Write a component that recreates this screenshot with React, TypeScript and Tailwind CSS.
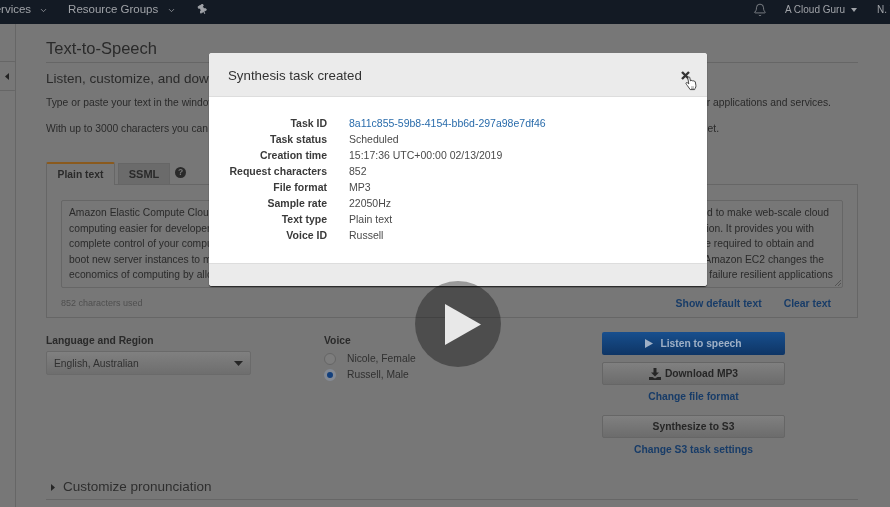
import { ChevronDown, Bell, Pin } from 'lucide-react'

const details = [
  ['Task ID', '8a11c855-59b8-4154-bb6d-297a98e7df46'],
  ['Task status', 'Scheduled'],
  ['Creation time', '15:17:36 UTC+00:00 02/13/2019'],
  ['Request characters', '852'],
  ['File format', 'MP3'],
  ['Sample rate', '22050Hz'],
  ['Text type', 'Plain text'],
  ['Voice ID', 'Russell'],
]

// the middle of each line sits behind the modal
const textLines = [
  ['Amazon Elastic Compute Cloud (Amazon', 'designed to make web-scale cloud', 'flex justify-between pr-[6px]'],
  ['computing easier for developers. Amazon', 'friction. It provides you with', 'flex justify-between pr-[21px]'],
  ['complete control of your computing', 'the time required to obtain and', 'flex justify-between pr-[21px]'],
  ['boot new server instances to minutes', 'change. Amazon EC2 changes the', 'flex justify-between pr-[11px]'],
  ['economics of computing by allowing', 'to build failure resilient applications', 'flex justify-between pr-[2px]'],
]

function TopBar() {
  return (
    <div className="h-[24px] shrink-0 bg-[#131a24] flex items-center text-[11.5px] text-[#a0a3a8] pb-[5px] overflow-hidden">
      <span className="ml-[-13px]">Services</span>
      <ChevronDown className="w-[9px] h-[9px] ml-[8px] mt-[1px]" strokeWidth={2} />
      <span className="ml-[20px]">Resource Groups</span>
      <ChevronDown className="w-[9px] h-[9px] ml-[9px] mt-[1px]" strokeWidth={2} />
      <Pin className="w-[11px] h-[11px] ml-[21px] rotate-[-30deg] fill-[#a0a3a8]" strokeWidth={2} />
      <Bell className="w-[14px] h-[16px] ml-auto" strokeWidth={1.2} />
      <span className="ml-[18px] text-[10px]">A Cloud Guru</span>
      <svg className="ml-[6px]" width="6" height="4" viewBox="0 0 6 4"><path d="M0 0h6L3 4z" fill="#a0a3a8" /></svg>
      <span className="ml-[20px] w-[13px] shrink-0 whitespace-nowrap text-[10px]">N. Virginia</span>
    </div>
  )
}

function Sidebar() {
  return (
    <div className="relative w-[16px] shrink-0 border-r border-[#666666]">
      <div className="absolute left-0 top-[37px] w-[16px] h-[30px] bg-[#777777] border border-l-0 border-[#666666] rounded-r-[2px] flex items-center justify-center pr-[2px]">
        <svg width="4" height="7" viewBox="0 0 4 7"><path d="M4 0v7L0 3.5z" fill="#222222" /></svg>
      </div>
    </div>
  )
}

function Button({ children, primary }: { children: React.ReactNode; primary?: boolean }) {
  return (
    <div
      className={
        primary
          ? 'h-[23px] rounded-[2px] bg-gradient-to-b from-[#184f8e] to-[#0e3565] text-[#9fb0c6] text-[10.3px] font-bold flex items-center justify-center gap-[7px]'
          : 'h-[23px] rounded-[2px] border border-[#666666] bg-gradient-to-b from-[#808080] to-[#6c6c6c] text-[#262626] text-[10.3px] font-bold flex items-center justify-center gap-[4px]'
      }
    >
      {children}
    </div>
  )
}

function Modal() {
  return (
    <div className="absolute left-[209px] top-[53px] w-[498px] h-[233px] rounded-[3px] bg-white flex flex-col overflow-hidden shadow-[0_1px_1px_rgba(0,0,0,0.7)]">
      <div className="relative h-[44px] shrink-0 bg-[#ebebeb] border-b border-[#dddddd] flex items-center pl-[19px] pt-[2px] text-[13.3px] text-[#333333]">
        Synthesis task created
        <svg className="absolute left-[472px] top-[18px]" width="9" height="9" viewBox="0 0 9 9">
          <path d="M1 1l7 7M8 1L1 8" stroke="#333333" strokeWidth="2.4" />
        </svg>
        <svg className="absolute left-[476px] top-[23px]" width="12" height="15" viewBox="0 0 12 15">
          <path
            d="M3.2 1.2c.6-.6 1.4-.3 1.6.5l.7 3.4 .6-.6c.5-.3 1.1-.2 1.4.3.5-.3 1.1-.1 1.4.4.6-.2 1.2.1 1.4.7l.6 3.4c.2 1.2-.1 2.2-.8 3.1l-.5 1.2H5.2L2.4 9.6C1.8 8.8.9 8 1 7.2c.1-.7.9-.9 1.5-.4l1.3 1.1-.9-5.4c-.1-.5 0-1 .3-1.3z"
            fill="#ffffff"
            stroke="#333333"
            strokeWidth="0.9"
          />
          <path d="M6 11h3M6 12.4h3" stroke="#888888" strokeWidth="0.8" />
        </svg>
      </div>
      <div className="flex-1 pt-[18.5px]">
        {details.map(([label, value], i) => (
          <div key={label} className="flex h-[16.1px] items-center text-[10.5px]">
            <span className="w-[118px] text-right font-bold text-[#3a3a3a] whitespace-nowrap">{label}</span>
            <span className={i === 0 ? 'ml-[22px] text-[#2a6cab]' : 'ml-[22px] text-[#4a4a4a]'}>{value}</span>
          </div>
        ))}
      </div>
      <div className="h-[23px] shrink-0 bg-[#ebebeb] border-t border-[#dddddd]" />
    </div>
  )
}

export default function App() {
  return (
    <div className="relative w-[890px] h-[507px] overflow-hidden bg-[#777777] flex flex-col blur-[0.4px] font-['Liberation_Sans',Arial,sans-serif] text-[#262626]">
      <TopBar />
      <div className="flex flex-1 min-h-0">
        <Sidebar />
        <div className="w-[812px] ml-[30px] shrink-0">
          <div className="pt-[14px] pb-[4px] text-[16.5px] leading-[20px] text-[#2a2a2a] border-b border-[#666666]">Text-to-Speech</div>
          <div className="mt-[7px] text-[13.5px] leading-[18px] text-[#2a2a2a]">Listen, customize, and download speech</div>
          <div className="mt-[8px] flex justify-between pr-[27px] text-[10.3px] leading-[14px] text-[#2a2a2a]">
            <span>Type or paste your text in the window</span>
            <span>your applications and services.</span>
          </div>
          <div className="mt-[12px] flex justify-between pr-[139px] text-[10.3px] leading-[14px] text-[#2a2a2a]">
            <span>With up to 3000 characters you can</span>
            <span>internet.</span>
          </div>

          {/* Tabs */}
          <div className="mt-[25px] flex items-end h-[23px] text-[10.3px] font-bold">
            <div className="w-[69px] h-[23px] border-t-2 border-x border-t-[#8a5a1e] border-x-[#666666] rounded-t-[2px] flex items-center justify-center text-[#2a2a2a] relative top-[1px] bg-[#777777]">Plain text</div>
            <div className="w-[52px] h-[21px] ml-[3px] bg-[#6b6b6b] border border-[#666666] border-b-0 flex items-center justify-center text-[11px] text-[#2a2a2a]">SSML</div>
            <div className="w-[11px] h-[11px] ml-[5px] mb-[6px] rounded-full bg-[#2a2a2a] text-[#777777] text-[8.5px] font-bold leading-[11px] text-center">?</div>
          </div>

          {/* Text panel */}
          <div className="h-[134px] border border-[#666666] px-[14px] pt-[15px]">
            <div className="relative h-[88px] border border-[#666666] rounded-[2px] px-[7px] pt-[4px] overflow-hidden text-[10.3px] leading-[15.5px] text-[#2a2a2a]">
              {textLines.map(([left, right, cls]) => (
                <div key={left} className={cls}>
                  <span className="whitespace-nowrap">{left}</span>
                  <span className="whitespace-nowrap">{right}</span>
                </div>
              ))}
              <svg className="absolute right-[1px] bottom-[1px]" width="6" height="6" viewBox="0 0 6 6">
                <path d="M0 6l6-6M3 6l3-3" stroke="#444444" strokeWidth="0.7" />
              </svg>
            </div>
            <div className="mt-[8px] flex items-center text-[9px] text-[#4f4f4f]">
              <span>852 characters used</span>
              <span className="ml-auto mr-[22px] text-[10.4px] font-bold text-[#183c68]">Show default text</span>
              <span className="mr-[12px] text-[10.4px] font-bold text-[#183c68]">Clear text</span>
            </div>
          </div>

          {/* Options */}
          <div className="flex mt-[14px] h-[148px]">
            <div className="w-[205px]">
              <div className="h-[19px] pt-[1px] text-[10.3px] font-bold text-[#2a2a2a]">Language and Region</div>
              <div className="h-[24px] rounded-[2px] border border-[#6a6a6a] bg-gradient-to-b from-[#808080] to-[#6e6e6e] flex items-center justify-between px-[7px] text-[10.3px] text-[#303030]">
                <span className="pt-[2px]">English, Australian</span>
                <svg width="9" height="5" viewBox="0 0 9 5"><path d="M0 0h9L4.5 5z" fill="#262626" /></svg>
              </div>
            </div>
            <div className="ml-[73px] w-[278px]">
              <div className="h-[19px] pt-[1px] text-[10.3px] font-bold text-[#2a2a2a]">Voice</div>
              <div className="flex items-center h-[16px] text-[10.3px] text-[#303030]">
                <span className="w-[12px] h-[12px] rounded-full border border-[#666666] bg-[#7d7d7d]" />
                <span className="ml-[11px]">Nicole, Female</span>
              </div>
              <div className="flex items-center h-[16px] text-[10.3px] text-[#303030]">
                <span className="w-[12px] h-[12px] rounded-full border-[3px] border-[#848a94] bg-[#123f7c]" />
                <span className="ml-[11px]">Russell, Male</span>
              </div>
            </div>
            <div className="w-[183px] text-center text-[10.3px] font-bold text-[#183c68]">
              <Button primary>
                <svg width="8" height="9" viewBox="0 0 8 9"><path d="M0 0l8 4.5L0 9z" fill="#9fb0c6" /></svg>
                Listen to speech
              </Button>
              <div className="h-[7px]" />
              <Button>
                <svg width="12" height="12" viewBox="0 0 12 12">
                  <path d="M4.5 0h3v4.5H10L6 8.5 2 4.5h2.5zM0 9h3.5L6 10.5 8.5 9H12v3H0z" fill="#262626" />
                </svg>
                Download MP3
              </Button>
              <div className="mt-[5px] leading-[13px]">Change file format</div>
              <div className="h-[12px]" />
              <Button>Synthesize to S3</Button>
              <div className="mt-[5px] leading-[13px]">Change S3 task settings</div>
            </div>
          </div>

          <div className="-mt-[3px] pb-[2px] flex items-center border-b border-[#666666] text-[13.5px] leading-[20px] text-[#2e2e2e]">
            <svg className="ml-[5px]" width="4" height="7" viewBox="0 0 4 7"><path d="M0 0v7l4-3.5z" fill="#262626" /></svg>
            <span className="ml-[8px]">Customize pronunciation</span>
          </div>
        </div>
      </div>

      <Modal />

      {/* Video play button */}
      <div className="absolute left-[415px] top-[281px] w-[86px] h-[86px] rounded-full bg-black/35 flex items-center justify-center">
        <svg className="ml-[10px]" width="36" height="41" viewBox="0 0 36 41"><path d="M0 0l36 20.5L0 41z" fill="#e8e8e8" /></svg>
      </div>
    </div>
  )
}
